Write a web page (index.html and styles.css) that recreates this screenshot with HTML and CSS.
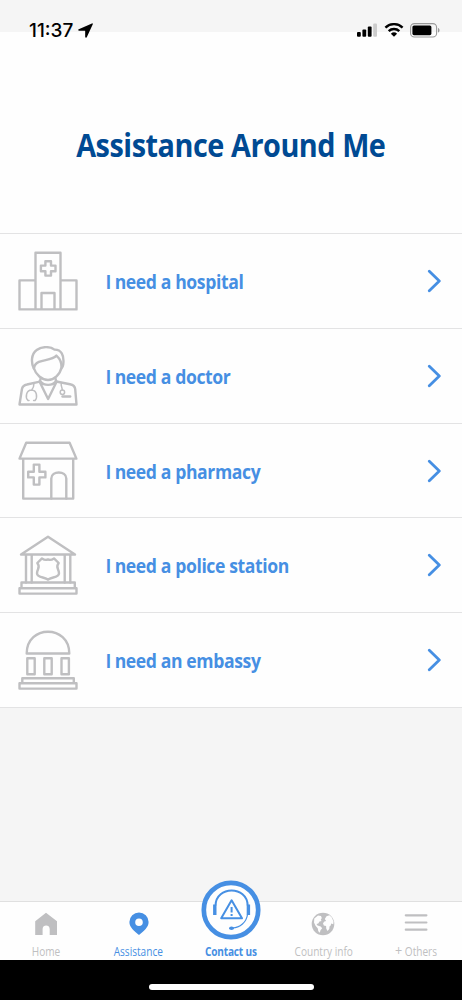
FILE: index.html
```html
<!DOCTYPE html>
<html lang="en">
<head>
    <meta charset="UTF-8">
    <meta name="viewport" content="width=device-width, initial-scale=1">
    <title>Assistance Around Me</title>
    <link rel="stylesheet" href="styles.css">
</head>
<body>
    <div class="screen">
        <div class="status-bar">
            <span class="time">11:37</span>
            <svg class="location" viewBox="0 0 14 14"><path d="M13 .4.7 5.8c-.8.4-.6 1.500.3 1.500h5.400c.2 0 .3.1.3.3v5.200c0 1 1.200 1.200 1.600.3L13.800 1.200c.2-.6-.3-1-.8-.8z"/></svg>
            <svg class="signal" viewBox="0 0 20 14">
                <rect x="0" y="9" width="3.8" height="4.8" rx="1"/>
                <rect x="5.4" y="6.6" width="3.8" height="7.2" rx="1"/>
                <rect x="10.8" y="3.6" width="3.8" height="10.2" rx="1"/>
                <rect class="off" x="16.2" y=".4" width="3.8" height="13.4" rx="1"/>
            </svg>
            <svg class="wifi" viewBox="0 0 20 14">
                <path d="M1.4 4.6a12.5 12.5 0 0 1 17.2 0M4.7 8.1a7.7 7.7 0 0 1 10.6 0"/>
                <path class="dot" d="M6.9 10.7a4.6 4.6 0 0 1 6.2 0L10 13.8z"/>
            </svg>
            <svg class="battery" viewBox="0 0 30 15">
                <rect class="shell" x=".6" y=".6" width="26" height="13.4" rx="3.8"/>
                <rect x="2.4" y="2.4" width="19" height="9.8" rx="1.6"/>
                <path class="cap" d="M28 5c2 .6 2 4 0 4.6z"/>
            </svg>
        </div>

        <div class="header">
            <h1>Assistance Around Me</h1>
        </div>

        <div class="list">
            <a class="row">
                <svg class="icon" viewBox="0 0 60 60">
                    <path d="M17.5 29.4h-16v29h57v-29h-16M17.5 58.4V1.7h25v56.7M23.5 58.4V42h13v16.4"/>
                    <path d="M27.4 10.2h5.6v4.4h4.5v5.6H33v4.4h-5.6v-4.4h-4.5v-5.6h4.5z"/>
                </svg>
                <span class="label"><span class="i">I</span> need a hospital</span>
                <svg class="chevron" viewBox="0 0 14 24"><path d="M2.3 2.3 12.3 12l-10 9.7"/></svg>
            </a>
            <a class="row">
                <svg class="icon" viewBox="0 0 60 60">
                    <path d="M15.8 22.5C13 17 13 8 18.7 4c5-3.8 13.5-3.7 17.800-.4C43 3.400 46.500 9 45.200 18.500c-.2 1.500-.9 3-1.800 4"/>
                    <path d="M16 22.5c1.800 6 7.800 11.500 14 11.500s12-5.500 13.500-12.500c.3-4.300-1.400-8.700-5.100-11.900-4 4.300-12 4-17.500 6.300-3 1.200-4.600 3-4.900 6.600z"/>
                    <path d="M22.5 33c0 2-.7 2.400-1.800 2.800L9 38.500c-3.500.7-4.600 2-5.100 4.700L1.500 58.500h57l-1.300-15.300c-.3-3-2.300-4.300-5.200-4.900L39.500 35.800c-1.300-.4-1.900-1-1.900-3"/>
                    <path d="M21.6 35.8 30.100 53l8.500-17.200M22.500 35.500c3.500 4.500 11.700 4.500 15.200 0"/>
                    <path class="thin" d="M16 37c0 3-.5 5-2.300 7M11 54.500h-1c-3-3-2-10.300 3.600-10.500 5.500.3 6 7.500 3.500 10.500h-1.500M43.300 37c-.7 3 .8 4 1 7"/>
                    <circle class="thin" cx="44.4" cy="46.2" r="2.2"/>
                    <path d="M44.5 50.500h7.700"/>
                </svg>
                <span class="label"><span class="i">I</span> need a doctor</span>
                <svg class="chevron" viewBox="0 0 14 24"><path d="M2.3 2.3 12.3 12l-10 9.7"/></svg>
            </a>
            <a class="row">
                <svg class="icon" viewBox="0 0 60 60">
                    <path d="M8.2 1.700h43.400l6.800 15.900H1.500zM5.200 17.600v40h50v-40"/>
                    <path d="M15.8 23.600h5.600v7.200h6v5.600h-6v7.200h-5.600v-7.200h-5.600v-5.600h5.600zM33.300 57.600V37.500c0-8 15-8 15 0v20.100"/>
                </svg>
                <span class="label"><span class="i">I</span> need a pharmacy</span>
                <svg class="chevron" viewBox="0 0 14 24"><path d="M2.3 2.3 12.3 12l-10 9.7"/></svg>
            </a>
            <a class="row">
                <svg class="icon" viewBox="0 0 60 60">
                    <path d="M30 1.800 57 19.500H3zM8 19.500v28M13.700 19.500v28M46.700 19.500v28M52.300 19.500v28"/>
                    <path d="M3.500 47.500h53.300v5.700H3.500zM1.500 53.200h57v5.400h-57z"/>
                    <path d="M30 24.400c2 .9 4 .4 6-1l4.700 4.600c-3.700 4.300.3 6 .3 10.200 0 5-8 3.500-11 6.500-3-3-11-1.500-11-6.500 0-4.200 4-5.900.3-10.200l4.700-4.600c2 1.400 4 1.900 6 1z"/>
                </svg>
                <span class="label"><span class="i">I</span> need a police station</span>
                <svg class="chevron" viewBox="0 0 14 24"><path d="M2.3 2.3 12.3 12l-10 9.7"/></svg>
            </a>
            <a class="row">
                <svg class="icon" viewBox="0 0 60 60">
                    <path d="M8.7 23.500C8.700-5.500 51.300-5.500 51.300 23.500z"/>
                    <path d="M9.3 28.300h7.400v16H9.300zM26.300 28.300h7.400v16h-7.400zM43.500 28.300h7.400v16h-7.400zM4.300 48.200h51.500v5.100H4.300zM1.500 53.300h57v5.300h-57z"/>
                </svg>
                <span class="label"><span class="i">I</span> need an embassy</span>
                <svg class="chevron" viewBox="0 0 14 24"><path d="M2.3 2.3 12.3 12l-10 9.7"/></svg>
            </a>
        </div>

        <div class="tabs">
            <a class="tab">
                <svg class="tab-icon" viewBox="0 0 24 24"><path d="M12 .8 23 9.300V23h-7.300v-6c0-4.600-7.100-4.600-7.100 0v6H1.200V9.300z"/></svg>
                <span>Home</span>
            </a>
            <a class="tab active">
                <svg class="tab-icon" viewBox="0 0 24 24"><path fill-rule="evenodd" d="M12 .5a9.600 9.600 0 0 0-9.600 9.600c0 5.200 4.600 9 9.600 13 5-4 9.600-7.800 9.600-13A9.600 9.600 0 0 0 12 .5zm0 6a3.800 3.800 0 1 1 0 7.600 3.800 3.800 0 0 1 0-7.600z"/></svg>
                <span>Assistance</span>
            </a>
            <a class="tab contact">
                <svg class="contact-icon" viewBox="0 0 60 60">
                    <circle class="ring" cx="30" cy="30" r="27.2"/>
                    <path d="M14.500 25.500C15 5.500 46.200 5.500 46.700 25.500"/>
                    <path class="ear" d="M13.800 24.500V35M47.400 24.500V35"/>
                    <path d="M30.600 20.300 41 38.300H20.200z"/>
                    <path d="M30.600 27v5.500M30.600 34v2"/>
                    <path class="mic" d="M46.500 34.500C45.500 42 39 48 31.500 48"/>
                    <ellipse class="dot" cx="30.5" cy="48.2" rx="2.5" ry="1.700"/>
                </svg>
                <span>Contact us</span>
            </a>
            <a class="tab">
                <svg class="tab-icon" viewBox="0 0 24 24">
                    <circle cx="12" cy="12" r="11.3"/>
                    <path class="land" d="M3.3 6.500 7 3.500l3 .6.800 1.800-1 1.800.8 1.400-2.100.5-1.200 1.800-1.800.6 1 1.600 3.200.8 1.500 1.800-1.700 2-.7 2.600-1.500-1.500-.6-3-2.200-2.600L3 10.500zM15.500 4.200l3-1 2.300 2.300 1.700 4-.2 2.700-2-.8-.8 2.300-1 .8-.2 2.600-1.800 2-1.300-2.600-.1-2.400-2.300-.6-.8-2.200 1.400-1.900 1.700-.5-1.300-2z"/>
                </svg>
                <span>Country info</span>
            </a>
            <a class="tab">
                <svg class="tab-icon menu" viewBox="0 0 24 24"><path d="M1.800 4.300h20.600M1.800 11.500h20.600M1.800 18.700h20.600"/></svg>
                <span><span class="plus">+</span> Others</span>
            </a>
        </div>

        <div class="home-area">
            <div class="home-indicator"></div>
        </div>
    </div>
</body>
</html>
```
FILE: styles.css
```css
* {
    box-sizing: border-box;
}
body {
    margin: 0;
    font-family: 'Open Sans', 'Noto Sans', sans-serif;
}
svg {
    display: block;
    flex: none;
}
.screen {
    display: flex;
    flex-direction: column;
    height: 1000px;
    background: #f5f5f5;
}
.status-bar {
    display: flex;
    align-items: center;
    height: 60px;
    padding: 0 22px 0 29px;
    background: linear-gradient(#f5f5f5 32px, #fefefe 32px);
}
.time {
    font-family: Inter, sans-serif;
    font-size: 19px;
    font-weight: 500;
    width: 45px;
    margin-right: 4px;
    white-space: nowrap;
}
.location {
    width: 15px;
    height: 15px;
}
.signal {
    width: 20px;
    height: 14px;
    margin-left: auto;
}
.signal .off {
    fill: #ccc;
}
.wifi {
    width: 20px;
    height: 14px;
    margin: 0 6px 0 7px;
}
.wifi path {
    fill: none;
    stroke: #000;
    stroke-width: 2.4;
}
.wifi .dot {
    fill: #000;
    stroke: none;
}
.battery {
    width: 30px;
    height: 15px;
}
.battery .shell {
    fill: none;
    stroke: #999;
    stroke-width: 1.1;
}
.battery .cap {
    fill: #999;
}
.header {
    display: flex;
    flex: none;
    align-items: center;
    justify-content: center;
    height: 173.4px;
    padding-bottom: 3px;
    background: #fefefe;
}
h1 {
    margin: 0;
    color: #004a93;
    font-size: 32px;
    font-weight: 700;
    letter-spacing: -0.5px;
    line-height: 44px;
    white-space: nowrap;
    transform: scaleX(0.9);
}
.row {
    display: flex;
    align-items: center;
    height: 94.7px;
    padding: 0 21px 0 17.5px;
    background: #fefefe;
    border-top: 1px solid #e3e3e4;
}
.row:last-child {
    height: 95.7px;
    border-bottom: 1px solid #e3e3e4;
}
.icon {
    width: 60px;
    height: 60px;
    fill: none;
    stroke: #bfbfc1;
    stroke-width: 2.4;
    stroke-linejoin: round;
    stroke-linecap: round;
}
.icon .thin {
    stroke-width: 1.5;
}
.label {
    flex: 1;
    margin-left: 28px;
    padding-top: 1px;
    color: #468fe3;
    font-size: 20px;
    font-weight: 700;
    letter-spacing: -0.45px;
    white-space: nowrap;
    transform: scaleX(0.88);
    transform-origin: left;
}
/* plain capital without serifs */
.label .i {
    font-family: 'Liberation Sans', sans-serif;
}
.chevron {
    width: 14px;
    height: 24px;
    fill: none;
    stroke: #468fe3;
    stroke-width: 2.8;
    stroke-linecap: round;
    stroke-linejoin: round;
}
.tabs {
    display: flex;
    height: 59px;
    margin-top: auto;
    background: #fefefe;
    border-top: 1px solid #e0e0e0;
}
.tab {
    display: flex;
    flex: 1;
    flex-direction: column;
    align-items: center;
    justify-content: flex-end;
    color: #bfbfc1;
    font-size: 12px;
    font-weight: 500;
    line-height: 16px;
    white-space: nowrap;
}
.tab > span {
    transform: scaleX(0.84);
}
.tab .plus {
    font-size: 15px;
    line-height: 1;
}
.tab-icon {
    width: 24px;
    height: 24px;
    margin-bottom: 8px;
    fill: #bfbfc1;
}
.tab-icon .land {
    fill: #fefefe;
}
.menu {
    stroke: #bfbfc1;
    stroke-width: 2.2;
    stroke-linecap: round;
}
.active {
    color: #468fe3;
}
.active .tab-icon {
    fill: #468fe3;
}
.contact {
    color: #468fe3;
    font-weight: 700;
}
.contact > span {
    letter-spacing: -0.2px;
}
.contact-icon {
    width: 60px;
    height: 60px;
    margin-bottom: 4px;
    fill: none;
    stroke: #468fe3;
    stroke-width: 2;
    stroke-linejoin: round;
}
.contact-icon .ring {
    fill: #fefefe;
    stroke-width: 4.7;
}
.contact-icon .ear {
    stroke-width: 3.4;
}
.contact-icon .mic {
    stroke-width: 1.2;
}
.contact-icon .dot {
    fill: #468fe3;
    stroke: none;
}
.home-area {
    display: flex;
    justify-content: center;
    height: 40px;
    padding-top: 24px;
    background: #000;
}
.home-indicator {
    width: 165px;
    height: 6px;
    border-radius: 3px;
    background: #fff;
}
```
